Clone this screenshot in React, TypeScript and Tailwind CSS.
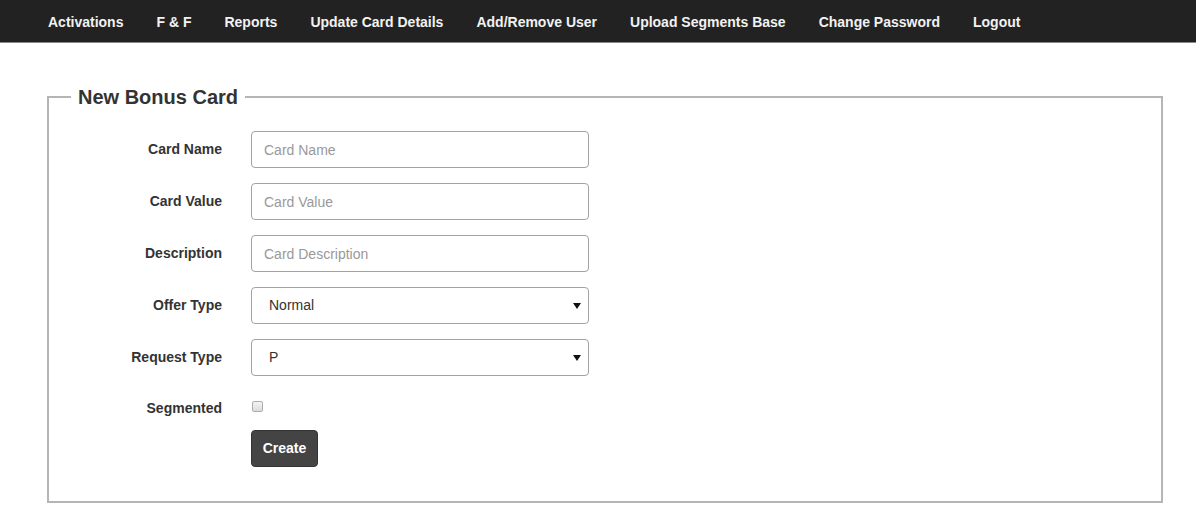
const NAV_ITEMS = [
  "Activations",
  "F & F",
  "Reports",
  "Update Card Details",
  "Add/Remove User",
  "Upload Segments Base",
  "Change Password",
  "Logout",
];

function TextRow({ label, placeholder }: { label: string; placeholder: string }) {
  return (
    <div className="flex items-center">
      <label className="w-[175px] text-right text-[14px] font-bold text-[#333]">{label}</label>
      <input
        type="text"
        placeholder={placeholder}
        className="ml-[29px] h-[37px] w-[338px] rounded-[4px] border border-[#a3a3a3] bg-white px-[12px] text-[14px] text-[#555] outline-none placeholder:text-[#999]"
      />
    </div>
  );
}

function SelectRow({ label, value }: { label: string; value: string }) {
  return (
    <div className="flex items-center">
      <label className="w-[175px] text-right text-[14px] font-bold text-[#333]">{label}</label>
      <div className="ml-[29px] flex h-[37px] w-[338px] items-center justify-between rounded-[4px] border border-[#a3a3a3] bg-white pl-[17px] pr-[7px] text-[14px] text-[#333]">
        <span>{value}</span>
        <svg width="8" height="6" viewBox="0 0 8 6" className="mt-[1px]">
          <path d="M0 0 L8 0 L4 6 Z" fill="#111" />
        </svg>
      </div>
    </div>
  );
}

export default function App() {
  return (
    <div className="min-h-[510px] bg-white font-['Liberation_Sans',Arial,sans-serif]">
      <nav className="flex h-[43px] items-center border-b border-[#8a8a8a] bg-[#222] pl-[31.5px] pt-[2px]">
        {NAV_ITEMS.map((item) => (
          <a key={item} href="#" className="px-[16.5px] text-[14px] font-bold text-[#f2f2f2]">
            {item}
          </a>
        ))}
      </nav>

      <fieldset className="ml-[47px] mt-[40px] w-[1116px] border-2 border-[#b5b5b5] pb-[34px] pl-[22px]">
        <legend className="px-[7px] text-[20px] font-bold leading-[28px] text-[#333]">New Bonus Card</legend>
        <div className="-ml-[24px] mt-[20px] flex flex-col gap-[15px]">
          <TextRow label="Card Name" placeholder="Card Name" />
          <TextRow label="Card Value" placeholder="Card Value" />
          <TextRow label="Description" placeholder="Card Description" />
          <SelectRow label="Offer Type" value="Normal" />
          <SelectRow label="Request Type" value="P" />
          <div className="flex items-center pt-[7px]">
            <label className="w-[175px] text-right text-[14px] font-bold text-[#333]">Segmented</label>
            <input
              type="checkbox"
              className="ml-[30px] -mt-[4px] h-[11px] w-[11px] appearance-none rounded-[2px] border border-[#adadad] bg-gradient-to-b from-[#f4f4f4] to-[#dcdcdc]"
            />
          </div>
          <div className="flex">
            <button className="ml-[204px] -mt-[4px] h-[37px] w-[67px] rounded-[4px] border border-[#333] bg-[#444] text-[14px] font-bold text-white">
              Create
            </button>
          </div>
        </div>
      </fieldset>
    </div>
  );
}
